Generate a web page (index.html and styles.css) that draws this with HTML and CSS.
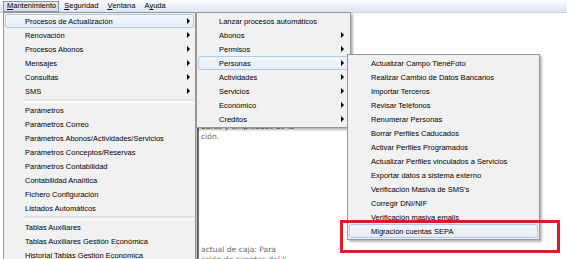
FILE: index.html
```html
<!DOCTYPE html>
<html lang="es">
<head>
<meta charset="utf-8">
<title>Mantenimiento</title>
<link rel="stylesheet" href="styles.css">
</head>
<body>
<div class="app">
  <nav class="menubar">
    <span class="mb-item is-open"><u>M</u>antenimiento</span>
    <span class="mb-item"><u>S</u>eguridad</span>
    <span class="mb-item"><u>V</u>entana</span>
    <span class="mb-item">A<u>y</u>uda</span>
  </nav>
  <main class="workspace">
    <div class="side"></div>
    <div class="panel">
      <p class="para para-top">bares y empleados de la<br>ción.</p>
      <p class="para para-bottom">actual de caja: Para<br>ación de cuentas del li</p>
    </div>
  </main>

  <ul class="menu menu-main">
    <li class="item is-hot"><span>Procesos de Actualización</span><i class="arrow"></i></li>
    <li class="item"><span>Renovación</span><i class="arrow"></i></li>
    <li class="item"><span>Procesos Abonos</span><i class="arrow"></i></li>
    <li class="item"><span>Mensajes</span><i class="arrow"></i></li>
    <li class="item"><span>Consultas</span><i class="arrow"></i></li>
    <li class="item"><span>SMS</span><i class="arrow"></i></li>
    <li class="sep"></li>
    <li class="item"><span>Parámetros</span></li>
    <li class="item"><span>Parámetros Correo</span></li>
    <li class="item"><span>Parámetros Abonos/Actividades/Servicios</span></li>
    <li class="item"><span>Parámetros Conceptos/Reservas</span></li>
    <li class="item"><span>Parámetros Contabilidad</span></li>
    <li class="item"><span>Contabilidad Analítica</span></li>
    <li class="item"><span>Fichero Configuración</span></li>
    <li class="item"><span>Listados Automáticos</span></li>
    <li class="sep"></li>
    <li class="item"><span>Tablas Auxiliares</span></li>
    <li class="item"><span>Tablas Auxiliares Gestión Económica</span></li>
    <li class="item"><span>Historial Tablas Gestión Económica</span></li>
  </ul>

  <ul class="menu menu-sub">
    <li class="item"><span>Lanzar procesos automáticos</span></li>
    <li class="item"><span>Abonos</span><i class="arrow"></i></li>
    <li class="item"><span>Permisos</span><i class="arrow"></i></li>
    <li class="item is-hot"><span>Personas</span><i class="arrow"></i></li>
    <li class="item"><span>Actividades</span><i class="arrow"></i></li>
    <li class="item"><span>Servicios</span><i class="arrow"></i></li>
    <li class="item"><span>Económico</span><i class="arrow"></i></li>
    <li class="item"><span>Creditos</span><i class="arrow"></i></li>
  </ul>

  <ul class="menu menu-personas">
    <li class="item"><span>Actualizar Campo TieneFoto</span></li>
    <li class="item"><span>Realizar Cambio de Datos Bancarios</span></li>
    <li class="item"><span>Importar Terceros</span></li>
    <li class="item"><span>Revisar Teléfonos</span></li>
    <li class="item"><span>Renumerar Personas</span></li>
    <li class="item"><span>Borrar Perfiles Caducados</span></li>
    <li class="item"><span>Activar Perfiles Programados</span></li>
    <li class="item"><span>Actualizar Perfiles vinculados a Servicios</span></li>
    <li class="item"><span>Exportar datos a sistema externo</span></li>
    <li class="item"><span>Verificación Masiva de SMS's</span></li>
    <li class="item"><span>Corregir DNI/NIF</span></li>
    <li class="item"><span>Verificación masiva emails</span></li>
    <li class="item is-hot"><span>Migración cuentas SEPA</span></li>
  </ul>

  <div class="callout"></div>
</div>
</body>
</html>
```

FILE: styles.css
```css
* { box-sizing: border-box; }
html, body { margin: 0; padding: 0; }
body {
  width: 567px;
  height: 259px;
  overflow: hidden;
  background: #ffffff;
  font-family: "Liberation Sans", Arial, sans-serif;
  font-size: 7.5px;
  color: #000;
}
.app {
  position: relative;
  width: 567px;
  height: 259px;
  overflow: hidden;
  display: flex;
  flex-direction: column;
}

/* menubar */
.menubar {
  flex: none;
  height: 13px;
  display: flex;
  align-items: stretch;
  gap: 1px;
  padding: 1px 0 0 3px;
  background: linear-gradient(#fbfcfe, #eef2f8 45%, #dce4f0);
  border-bottom: 1px solid #c9d3e2;
}
.mb-item {
  display: flex;
  align-items: center;
  padding: 0 3px 1px 3px;
  border: 1px solid transparent;
  line-height: 1;
}
.mb-item u { text-decoration: underline; text-underline-offset: 1px; }
.mb-item.is-open {
  border-color: #8d96a3;
  background: linear-gradient(#e4e9f0, #d9e0ea);
  padding-right: 2px;
}

/* background document */
.workspace {
  flex: 1;
  display: grid;
  grid-template-columns: 197px 1fr;
  min-height: 0;
}
.side { background: #ffffff; }
.panel {
  border-left: 2px solid #7a7a7a;
  padding-left: 2px;
  font-family: "DejaVu Sans", Verdana, sans-serif;
  font-size: 7.6px;
  line-height: 10px;
  color: #666;
  overflow: hidden;
}
.para { margin: 0; white-space: nowrap; }
.para-top { margin-top: 109px; }
.para-bottom { margin-top: 103px; }

/* popup menus */
.menu {
  position: absolute;
  margin: 0;
  padding: 1px;
  list-style: none;
  background: #f1f1f1;
  border: 1px solid #979797;
  box-shadow: 2px 2px 2px rgba(0, 0, 0, 0.28);
}
.menu-main { left: 3px; top: 12px; width: 193px; height: 270px; }
.menu-sub { left: 196px; top: 12px; width: 155px; }
.menu-personas { left: 347px; top: 54px; width: 193px; }

.item {
  height: 14px;
  display: flex;
  align-items: center;
  padding: 0 3px 0 19px;
  border: 1px solid transparent;
  border-radius: 2px;
  white-space: nowrap;
}
.menu-sub .item { padding-left: 20px; padding-right: 4px; }
.menu-personas .item { padding-left: 21px; }
.item.is-hot {
  border-color: #aecaf0;
  background: linear-gradient(#f4f7fc, #e6eefa);
}
.arrow {
  margin-left: auto;
  width: 0;
  height: 0;
  border-left: 3px solid #000;
  border-top: 3px solid transparent;
  border-bottom: 3px solid transparent;
}
.sep {
  height: 5px;
  margin-left: 19px;
  display: flex;
  align-items: center;
}
.sep::before {
  content: "";
  flex: 1;
  height: 2px;
  border-top: 1px solid #dcdcdc;
  border-bottom: 1px solid #ffffff;
}

/* highlight annotation */
.callout {
  position: absolute;
  left: 340px;
  top: 220px;
  width: 220px;
  height: 33px;
  border: 3px solid #dc1c24;
}
```
